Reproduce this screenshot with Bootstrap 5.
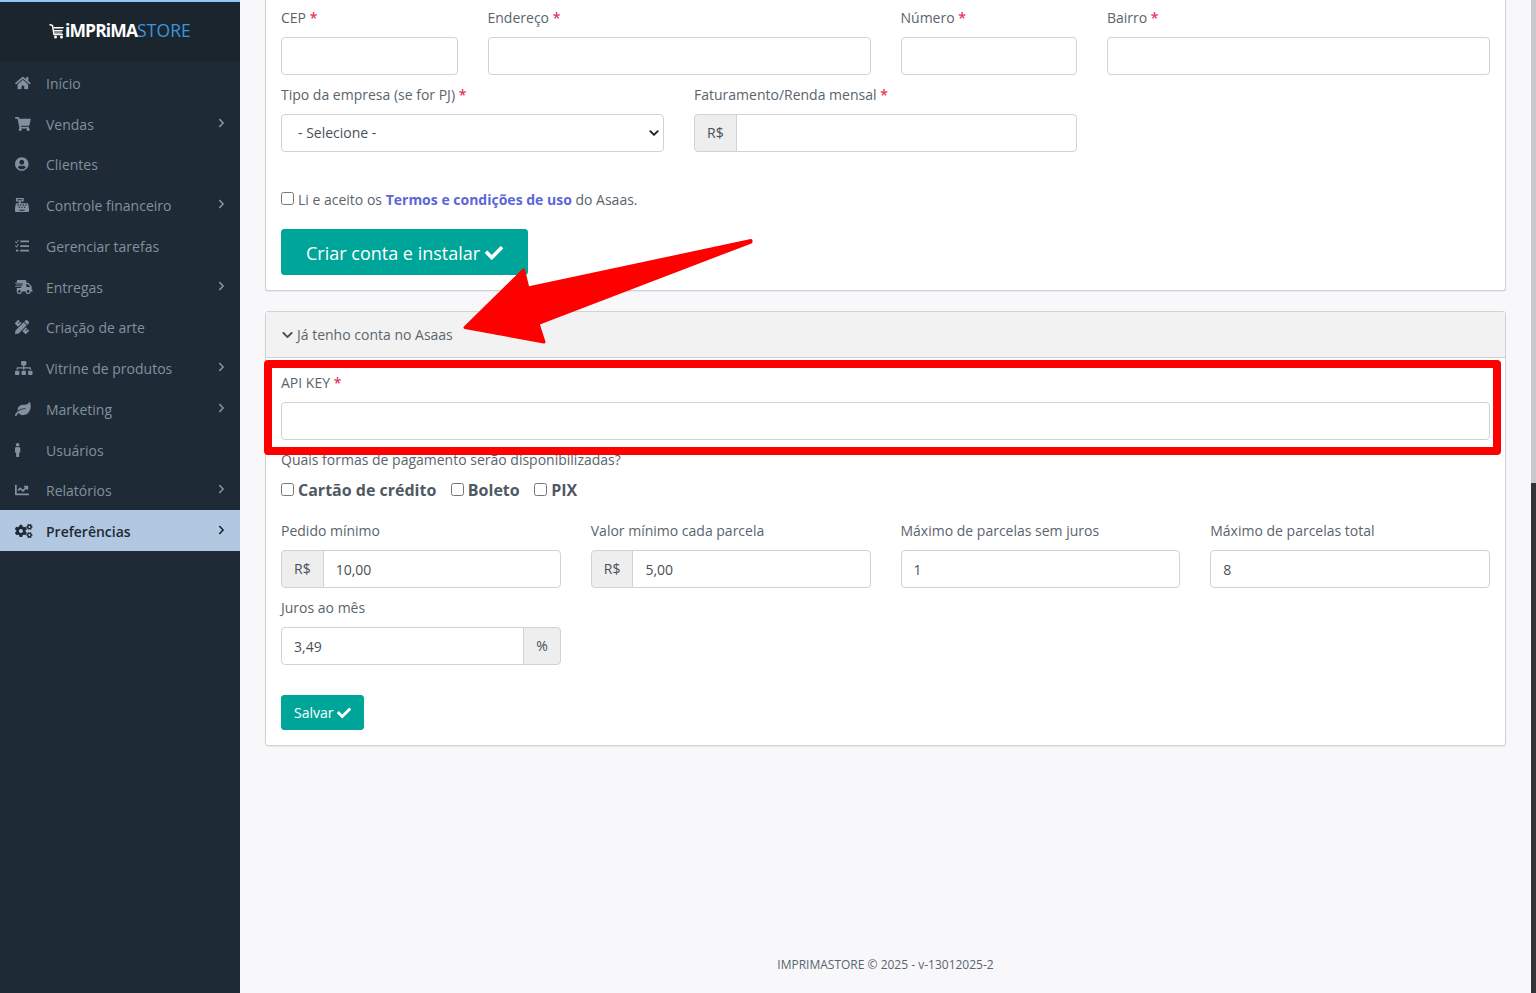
<!DOCTYPE html>
<html lang="pt-BR">
<head>
<meta charset="utf-8">
<title>Imprimastore</title>
<link href="https://cdn.jsdelivr.net/npm/bootstrap@5.3.0/dist/css/bootstrap.min.css" rel="stylesheet">
<style>
html,body{height:100%;}
body{font-family:"Open Sans","Liberation Sans",sans-serif;font-size:14px;color:#495057;background:#f8f8fb;overflow:hidden;}
.side{width:240px;flex:none;background:#1e2a35;border-top:2px solid #8cc8ff;height:100vh;}
.logo-zone{height:60px;padding-bottom:3px;background:#1a252e;color:#fff;font-weight:700;font-size:17.5px;letter-spacing:-.9px;white-space:nowrap;}
.logo-zone svg{width:16px;height:16px;}
.logo-store{color:#3a96de;font-weight:400;letter-spacing:.1px;}
.side-item{height:40.75px;padding:3px 15px 0;color:#82919f;line-height:1;}
.side-item .ico{width:18px;height:14px;fill:currentColor;flex:none;margin-right:13px;margin-top:-2px;}
.side-item .arr{width:7px;height:10px;fill:currentColor;margin-left:auto;margin-right:0;margin-top:-4px;}
.side-on{background:#b1c8e0;color:#1e2a35;font-weight:600;}
.main-pane{min-width:0;padding:0 25px;position:relative;}
.scroll-rail{width:5px;flex:none;background:#c9c9c9;}
.scroll-rail i{display:block;height:483px;}
.scroll-knob{background:#333;height:510px!important;}
.box{border:1px solid #d2d2d2;border-radius:3px;background:#fff;box-shadow:0 1px 1px rgba(0,0,0,.06);}
.box-first{border-top:0;border-radius:0 0 3px 3px;padding:8px 15px 15px;margin-bottom:20px;height:291px;}
.box-second{position:relative;}
.box-head{background:#f2f2f2;border-bottom:1px solid #d2d2d2;height:46px;padding:12px 15px 0;color:#5c666f;line-height:21px;}
.box-head svg{width:13px;height:12px;fill:#495057;margin-right:3px;vertical-align:-1px;}
.box-body{padding:15px 15px 15px;}
.row-30{--bs-gutter-x:30px;}
.fld{margin-bottom:10px;}
.lbl{display:block;line-height:21px;margin-top:-1px;margin-bottom:9px;color:#5a646d;}
.lbl b{color:#e8335a;font-weight:600;}
.form-control,.form-select,.input-group-text{font-size:14px;height:38px;border-color:#cfd2d6;border-radius:4px;color:#495057;}
.form-select{padding:5px 16px 7px;background-image:url("data:image/svg+xml,%3csvg xmlns='http://www.w3.org/2000/svg' viewBox='0 0 16 16'%3e%3cpath fill='none' stroke='%23222' stroke-linecap='round' stroke-linejoin='round' stroke-width='3' d='m2 5 6 6 6-6'/%3e%3c/svg%3e");background-position:right 3px center;background-size:12px 10px;}
.input-group-text{background:#eee;padding:5px 12px 7px;}
.terms{margin:27px 0 19px;line-height:21px;color:#5a646d;}
.terms a{color:#5a67d8;font-weight:700;text-decoration:none;}
.nat{margin:0 4px 0 0;width:13px;height:13px;vertical-align:0;}
.teal{background:#00a59a;border-color:#00a59a;color:#fff;}
.teal svg{fill:#fff;}
.teal:hover{background:#00a59a;color:#fff;}
.btn-big{font-size:18px;height:46px;padding:1px 24px 0;border-radius:3px;line-height:44px;}
.btn-big svg{width:18px;height:18px;vertical-align:-2px;}
.btn-sm2{font-size:14px;height:35px;padding:0 12px;border-radius:3px;line-height:33px;margin-top:20px;}
.btn-sm2 svg{width:14px;height:14px;vertical-align:-2px;}
.ques{line-height:21px;margin-top:-1px;color:#5a646d;}
.pay{margin:10px 0 20px;line-height:21px;font-size:16px;font-weight:700;color:#4f5963;gap:14.5px;}
.foot{font-size:12px;color:#5a646d;line-height:18px;padding-bottom:19px;}
.mark-frame{position:absolute;left:-2px;top:48px;width:1237px;height:95px;border:8px solid #f00;border-radius:4px;pointer-events:none;}
.mark-arrow{position:absolute;left:0;top:0;width:600px;height:400px;pointer-events:none;}
</style>
</head>
<body class="d-flex">
<aside class="side d-flex flex-column">
  <div class="logo-zone d-flex align-items-center justify-content-center">
    <svg viewBox="0 0 16 16"><path d="M.5 1.500l3 1 1.500 9h9" fill="none" stroke="#fff" stroke-width="1.500"/><path d="M4.500 4h10.500l-1 1.500H4.800zM5 7h9l-.6 1.500H5.300zM5.400 9.500h7.600v1H5.600z" fill="#fff"/><circle cx="6.500" cy="14" r="1.500" fill="#fff"/><circle cx="12.500" cy="14" r="1.500" fill="#fff"/></svg><span>iMPRiMA</span><span class="logo-store">STORE</span>
  </div>
  <div class="side-item d-flex align-items-center"><svg class="ico" preserveAspectRatio="xMinYMid" viewBox="0 0 576 512"><path d="M280.37 148.26L96 300.11V464a16 16 0 0 0 16 16l112.06-.29a16 16 0 0 0 15.92-16V368a16 16 0 0 1 16-16h64a16 16 0 0 1 16 16v95.64a16 16 0 0 0 16 16.05L464 480a16 16 0 0 0 16-16V300L295.67 148.26a12.19 12.19 0 0 0-15.3 0zM571.6 251.47L488 182.56V44.05a12 12 0 0 0-12-12h-56a12 12 0 0 0-12 12v72.61L318.47 43a48 48 0 0 0-61 0L4.34 251.47a12 12 0 0 0-1.6 16.9l25.5 31A12 12 0 0 0 45.15 301l235.22-193.74a12.19 12.19 0 0 1 15.3 0L530.9 301a12 12 0 0 0 16.9-1.6l25.5-31a12 12 0 0 0-1.7-16.93z"/></svg>Início</div>
  <div class="side-item d-flex align-items-center"><svg class="ico" preserveAspectRatio="xMinYMid" viewBox="0 0 576 512"><path d="M528.12 301.319l47.273-208C578.806 78.301 567.391 64 551.99 64H159.208l-9.166-44.81C147.758 8.021 137.93 0 126.529 0H24C10.745 0 0 10.745 0 24v16c0 13.255 10.745 24 24 24h69.883l70.248 343.435C147.325 417.1 136 435.222 136 456c0 30.928 25.072 56 56 56s56-25.072 56-56c0-15.674-6.447-29.835-16.824-40h209.647C430.447 426.165 424 440.326 424 456c0 30.928 25.072 56 56 56s56-25.072 56-56c0-22.172-12.888-41.332-31.579-50.405l5.517-24.276c3.413-15.018-8.002-29.319-23.403-29.319H218.117l-6.545-32h293.145c11.206 0 20.92-7.754 23.403-18.681z"/></svg>Vendas<svg class="arr" viewBox="0 0 320 512"><use href="#chev"/></svg></div>
  <div class="side-item d-flex align-items-center"><svg class="ico" preserveAspectRatio="xMinYMid" viewBox="0 0 496 512"><path d="M248 8C111 8 0 119 0 256s111 248 248 248 248-111 248-248S385 8 248 8zm0 96c48.6 0 88 39.4 88 88s-39.4 88-88 88-88-39.4-88-88 39.4-88 88-88zm0 344c-58.7 0-111.3-26.6-146.5-68.2 18.8-35.4 55.6-59.8 98.5-59.8 2.4 0 4.8.4 7.1 1.1 13 4.2 26.6 6.9 40.9 6.9 14.3 0 28-2.7 40.9-6.9 2.3-.7 4.7-1.1 7.1-1.1 42.9 0 79.7 24.4 98.5 59.8C359.3 421.4 306.7 448 248 448z"/></svg>Clientes</div>
  <div class="side-item d-flex align-items-center"><svg class="ico" preserveAspectRatio="xMinYMid" viewBox="0 0 512 512"><path d="M511.1 378.8l-26.700-160c-2.600-15.400-15.900-26.700-31.600-26.700H208v-64h96c8.800 0 16-7.200 16-16V16c0-8.800-7.200-16-16-16H48c-8.800 0-16 7.200-16 16v96c0 8.800 7.200 16 16 16h96v64H59.100c-15.600 0-29 11.300-31.600 26.700L.8 378.700c-.6 3.500-.9 7-.9 10.500V480c0 17.700 14.300 32 32 32h448c17.700 0 32-14.300 32-32v-90.700c.1-3.500-.2-7-.8-10.500zM280 248c0-8.800 7.200-16 16-16h16c8.800 0 16 7.200 16 16v16c0 8.800-7.200 16-16 16h-16c-8.800 0-16-7.200-16-16v-16zm-32 64h16c8.800 0 16 7.200 16 16v16c0 8.800-7.200 16-16 16h-16c-8.800 0-16-7.200-16-16v-16c0-8.800 7.200-16 16-16zm-32-80c8.800 0 16 7.200 16 16v16c0 8.800-7.200 16-16 16h-16c-8.800 0-16-7.200-16-16v-16c0-8.800 7.200-16 16-16h16zM80 80V48h192v32H80zm40 200h-16c-8.800 0-16-7.200-16-16v-16c0-8.800 7.200-16 16-16h16c8.800 0 16 7.200 16 16v16c0 8.800-7.200 16-16 16zm16 64v-16c0-8.800 7.200-16 16-16h16c8.800 0 16 7.200 16 16v16c0 8.800-7.200 16-16 16h-16c-8.800 0-16-7.200-16-16zm216 112c0 4.400-3.600 8-8 8H168c-4.400 0-8-3.600-8-8v-16c0-4.400 3.600-8 8-8h176c4.400 0 8 3.600 8 8v16zm24-112c0 8.800-7.200 16-16 16h-16c-8.800 0-16-7.200-16-16v-16c0-8.800 7.200-16 16-16h16c8.800 0 16 7.200 16 16v16zm48-80c0 8.800-7.200 16-16 16h-16c-8.800 0-16-7.200-16-16v-16c0-8.800 7.200-16 16-16h16c8.800 0 16 7.200 16 16v16z"/></svg>Controle financeiro<svg class="arr" viewBox="0 0 320 512"><use href="#chev"/></svg></div>
  <div class="side-item d-flex align-items-center"><svg class="ico" preserveAspectRatio="xMinYMid" viewBox="0 0 16 16"><path d="M6 1.800h10v2H6zM6 7h10v2H6zM6 12.200h10v2H6zM1 12.200h3v2H1zM.6 2.600l1 1L3.600.8l.8.7-2.700 3.700L0 3.400zM.6 7.200l1 1 2-2.600.8.7-2.700 3.600L0 8z"/></svg>Gerenciar tarefas</div>
  <div class="side-item d-flex align-items-center"><svg class="ico" preserveAspectRatio="xMinYMid" viewBox="0 0 640 512"><path d="M624 352h-16V243.900c0-12.700-5.100-24.900-14.100-33.900L494 110.100c-9-9-21.200-14.100-33.900-14.100H416V48c0-26.500-21.500-48-48-48H112C85.500 0 64 21.500 64 48v48H8c-4.400 0-8 3.600-8 8v16c0 4.400 3.600 8 8 8h272c4.400 0 8 3.600 8 8v16c0 4.400-3.600 8-8 8H40c-4.400 0-8 3.600-8 8v16c0 4.400 3.600 8 8 8h208c4.400 0 8 3.600 8 8v16c0 4.400-3.600 8-8 8H8c-4.400 0-8 3.600-8 8v16c0 4.400 3.600 8 8 8h208c4.400 0 8 3.600 8 8v16c0 4.400-3.600 8-8 8H64v128c0 53 43 96 96 96s96-43 96-96h128c0 53 43 96 96 96s96-43 96-96h48c8.800 0 16-7.200 16-16v-32c0-8.800-7.200-16-16-16zM160 464c-26.500 0-48-21.500-48-48s21.500-48 48-48 48 21.500 48 48-21.500 48-48 48zm320 0c-26.500 0-48-21.500-48-48s21.500-48 48-48 48 21.500 48 48-21.500 48-48 48zm80-208H416V144h44.100l99.900 99.900V256z"/></svg>Entregas<svg class="arr" viewBox="0 0 320 512"><use href="#chev"/></svg></div>
  <div class="side-item d-flex align-items-center"><svg class="ico" preserveAspectRatio="xMinYMid" viewBox="0 0 512 512"><path d="M109.46 244.04l134.58-134.56-44.12-44.12-61.68 61.68a7.919 7.919 0 0 1-11.21 0l-11.21-11.21c-3.1-3.1-3.1-8.12 0-11.21l61.68-61.68-33.64-33.65C131.47-3.1 111.39-3.1 99 9.29L9.29 99c-12.38 12.39-12.39 32.47 0 44.86l100.17 100.18zm388.47-116.8c18.76-18.76 18.75-49.17 0-67.93l-45.25-45.25c-18.76-18.76-49.18-18.76-67.95 0l-46.02 46.01 113.2 113.2 46.02-46.03zM316.08 82.71l-297 296.96L.32 487.11c-2.53 14.49 10.09 27.11 24.59 24.56l107.45-18.84L429.28 195.9 316.08 82.71zm186.63 285.43l-33.64-33.64-61.68 61.68c-3.1 3.1-8.12 3.1-11.21 0l-11.21-11.21c-3.09-3.1-3.09-8.12 0-11.21l61.68-61.68-44.14-44.14L267.93 402.5l100.21 100.2c12.39 12.39 32.47 12.39 44.86 0l89.71-89.7c12.39-12.39 12.39-32.47 0-44.86z"/></svg>Criação de arte</div>
  <div class="side-item d-flex align-items-center"><svg class="ico" preserveAspectRatio="xMinYMid" viewBox="0 0 640 512"><path d="M128 352H32c-17.67 0-32 14.33-32 32v96c0 17.67 14.33 32 32 32h96c17.67 0 32-14.33 32-32v-96c0-17.67-14.33-32-32-32zm-24-80h192v48h48v-48h192v48h48v-57.59c0-21.17-17.23-38.41-38.41-38.41H344v-64h40c17.67 0 32-14.33 32-32V32c0-17.67-14.33-32-32-32H256c-17.67 0-32 14.33-32 32v96c0 17.67 14.33 32 32 32h40v64H94.41C73.23 224 56 241.23 56 262.41V320h48v-48zm264 80h-96c-17.67 0-32 14.33-32 32v96c0 17.67 14.33 32 32 32h96c17.67 0 32-14.33 32-32v-96c0-17.67-14.33-32-32-32zm240 0h-96c-17.67 0-32 14.33-32 32v96c0 17.67 14.33 32 32 32h96c17.67 0 32-14.33 32-32v-96c0-17.67-14.33-32-32-32z"/></svg>Vitrine de produtos<svg class="arr" viewBox="0 0 320 512"><use href="#chev"/></svg></div>
  <div class="side-item d-flex align-items-center"><svg class="ico" preserveAspectRatio="xMinYMid" viewBox="0 0 576 512"><path d="M546.200 9.700c-5.600-12.500-21.600-13-28.300-1.200C486.900 62.400 431.400 96 368 96h-80C182 96 96 182 96 288c0 7 .8 13.700 1.500 20.500C161.300 262.800 253.400 224 384 224c8.800 0 16 7.200 16 16s-7.200 16-16 16C132.600 256 26 410.100 2.400 468c-6.600 16.300 1.200 34.900 17.500 41.600 16.400 6.800 35-1.100 41.800-17.300 1.500-3.600 20.900-47.900 71.900-90.600 32.400 43.900 94 85.800 174.900 77.200C465.500 467.500 576 326.700 576 154.300c0-50.200-10.800-102.200-29.800-144.600z"/></svg>Marketing<svg class="arr" viewBox="0 0 320 512"><use href="#chev"/></svg></div>
  <div class="side-item d-flex align-items-center"><svg class="ico" preserveAspectRatio="xMinYMid" viewBox="0 0 192 512"><path d="M96 0c35.346 0 64 28.654 64 64s-28.654 64-64 64-64-28.654-64-64S60.654 0 96 0m48 144h-11.360c-22.711 10.443-49.590 10.894-73.280 0H48c-26.510 0-48 21.490-48 48v136c0 13.255 10.745 24 24 24h16v136c0 13.255 10.745 24 24 24h64c13.255 0 24-10.745 24-24V352h16c13.255 0 24-10.745 24-24V192c0-26.510-21.490-48-48-48z"/></svg>Usuários</div>
  <div class="side-item d-flex align-items-center"><svg class="ico" preserveAspectRatio="xMinYMid" viewBox="0 0 512 512"><path d="M496 384H64V80c0-8.840-7.160-16-16-16H16C7.160 64 0 71.160 0 80v336c0 17.670 14.330 32 32 32h464c8.840 0 16-7.160 16-16v-32c0-8.840-7.160-16-16-16zM464 96H345.940c-21.380 0-32.090 25.850-16.970 40.970l32.400 32.400L288 242.750l-73.370-73.370c-12.500-12.500-32.760-12.500-45.250 0l-68.690 68.690c-6.250 6.250-6.250 16.380 0 22.630l22.620 22.620c6.250 6.250 16.380 6.250 22.630 0L192 237.250l73.370 73.370c12.500 12.500 32.760 12.500 45.250 0l96-96 32.400 32.400c15.120 15.120 40.970 4.410 40.970-16.970V112c0-8.840-7.160-16-16-16z"/></svg>Relatórios<svg class="arr" viewBox="0 0 320 512"><use href="#chev"/></svg></div>
  <div class="side-item side-on d-flex align-items-center"><svg class="ico" preserveAspectRatio="xMinYMid" viewBox="0 0 640 512"><path d="M512.100 191l-8.200 14.300c-3 5.300-9.400 7.500-15.100 5.400-11.800-4.400-22.600-10.700-32.100-18.600-4.600-3.800-5.800-10.500-2.800-15.700l8.200-14.300c-6.900-8-12.300-17.300-15.900-27.400h-16.500c-6 0-11.200-4.300-12.200-10.300-2-12-2.100-24.600 0-37.100 1-6 6.200-10.400 12.200-10.400h16.500c3.600-10.100 9-19.400 15.900-27.400l-8.200-14.300c-3-5.200-1.900-11.900 2.800-15.700 9.500-7.900 20.400-14.200 32.100-18.600 5.700-2.100 12.100.1 15.100 5.400l8.200 14.300c10.500-1.900 21.200-1.900 31.700 0L552.600 4.400c3-5.300 9.400-7.500 15.100-5.400 11.800 4.400 22.600 10.700 32.100 18.600 4.600 3.800 5.800 10.500 2.800 15.700l-8.200 14.300c6.900 8 12.300 17.300 15.900 27.400h16.500c6 0 11.200 4.300 12.200 10.300 2 12 2.100 24.600 0 37.100-1 6-6.200 10.400-12.200 10.400h-16.500c-3.600 10.100-9 19.400-15.900 27.400l8.200 14.300c3 5.200 1.900 11.900-2.800 15.700-9.500 7.900-20.400 14.200-32.100 18.600-5.700 2.100-12.100-.1-15.100-5.400l-8.200-14.300c-10.400 1.900-21.200 1.900-31.700 0zm-10.500-58.800c38.500 29.600 82.400-14.300 52.800-52.800-38.500-29.700-82.400 14.300-52.800 52.800zM386.300 286.100l33.700 16.800c10.100 5.800 14.500 18.100 10.500 29.100-8.900 24.200-26.400 46.400-42.600 65.800-7.400 8.900-20.200 11.100-30.300 5.300l-29.100-16.800c-16 13.700-34.600 24.600-54.900 31.700v33.600c0 11.600-8.300 21.600-19.700 23.600-24.600 4.200-50.400 4.400-75.900 0-11.500-2-20-11.900-20-23.600V418c-20.300-7.200-38.900-18-54.900-31.700L74 403c-10 5.800-22.900 3.600-30.300-5.300-16.200-19.400-33.300-41.600-42.200-65.700-4-10.900.4-23.200 10.500-29.100l33.300-16.800c-3.900-20.900-3.900-42.400 0-63.400L12 205.800c-10.100-5.800-14.600-18.100-10.500-29 8.900-24.200 26-46.400 42.200-65.800 7.400-8.900 20.200-11.100 30.300-5.300l29.100 16.800c16-13.700 34.600-24.600 54.900-31.700V57.100c0-11.500 8.200-21.500 19.600-23.500 24.600-4.200 50.500-4.400 76-.1 11.500 2 20 11.900 20 23.600v33.600c20.300 7.200 38.900 18 54.900 31.700l29.100-16.800c10-5.800 22.900-3.600 30.300 5.300 16.200 19.400 33.200 41.600 42.100 65.800 4 10.900.1 23.200-10 29.100l-33.700 16.800c3.900 21 3.900 42.500 0 63.500zm-117.600 21.100c59.200-77-28.700-164.900-105.700-105.700-59.200 77 28.700 164.900 105.700 105.700zm243.400 182.700l-8.200 14.300c-3 5.300-9.400 7.500-15.100 5.400-11.800-4.400-22.600-10.700-32.100-18.600-4.600-3.800-5.800-10.500-2.800-15.700l8.200-14.300c-6.900-8-12.300-17.300-15.900-27.400h-16.500c-6 0-11.200-4.300-12.200-10.300-2-12-2.100-24.600 0-37.100 1-6 6.200-10.400 12.200-10.400h16.500c3.600-10.100 9-19.400 15.900-27.400l-8.200-14.300c-3-5.200-1.900-11.900 2.800-15.700 9.500-7.900 20.400-14.200 32.100-18.600 5.700-2.100 12.100.1 15.100 5.400l8.200 14.300c10.500-1.900 21.200-1.900 31.700 0l8.200-14.300c3-5.300 9.400-7.500 15.100-5.400 11.800 4.400 22.600 10.700 32.100 18.600 4.600 3.800 5.800 10.500 2.800 15.700l-8.200 14.300c6.900 8 12.300 17.300 15.900 27.400h16.500c6 0 11.200 4.300 12.200 10.300 2 12 2.100 24.600 0 37.100-1 6-6.200 10.400-12.200 10.400h-16.500c-3.600 10.100-9 19.400-15.900 27.400l8.200 14.300c3 5.200 1.900 11.900-2.800 15.700-9.500 7.900-20.400 14.200-32.100 18.600-5.700 2.100-12.100-.1-15.100-5.400l-8.200-14.300c-10.400 1.900-21.200 1.900-31.700 0zM501.600 431c38.500 29.600 82.400-14.300 52.800-52.800-38.500-29.600-82.400 14.300-52.800 52.800z"/></svg>Preferências<svg class="arr" viewBox="0 0 320 512"><use href="#chev"/></svg></div>
</aside>
<svg width="0" height="0" class="position-absolute"><defs><path id="chev" d="M285.476 272.971L91.132 467.314c-9.373 9.373-24.569 9.373-33.941 0l-22.667-22.667c-9.357-9.357-9.375-24.522-.04-33.901L188.505 256 34.484 101.255c-9.335-9.379-9.317-24.544.04-33.901l22.667-22.667c9.373-9.373 24.569-9.373 33.941 0L285.475 239.03c9.373 9.372 9.373 24.568.001 33.941z"/></defs></svg>
<main class="main-pane flex-grow-1 d-flex flex-column">
  <section class="box box-first">
    <div class="row row-30">
      <div class="col-2 fld"><label class="lbl">CEP <b>*</b></label><input class="form-control"></div>
      <div class="col-4 fld"><label class="lbl">Endereço <b>*</b></label><input class="form-control"></div>
      <div class="col-2 fld"><label class="lbl">Número <b>*</b></label><input class="form-control"></div>
      <div class="col-4 fld"><label class="lbl">Bairro <b>*</b></label><input class="form-control"></div>
    </div>
    <div class="row row-30">
      <div class="col-4 fld"><label class="lbl">Tipo da empresa (se for PJ) <b>*</b></label><select class="form-select"><option>- Selecione -</option></select></div>
      <div class="col-4 fld"><label class="lbl">Faturamento/Renda mensal <b>*</b></label><div class="input-group"><span class="input-group-text">R$</span><input class="form-control"></div></div>
    </div>
    <div class="terms"><input type="checkbox" class="nat">Li e aceito os <a href="#">Termos e condições de uso</a> do Asaas.</div>
    <button class="btn teal btn-big">Criar conta e instalar <svg viewBox="0 0 512 512"><use href="#tick"/></svg></button>
  </section>
  <section class="box box-second">
    <div class="box-head"><svg viewBox="0 0 448 512"><path d="M207.029 381.476L12.686 187.132c-9.373-9.373-9.373-24.569 0-33.941l22.667-22.667c9.357-9.357 24.522-9.375 33.901-.04L224 284.505l154.745-154.021c9.379-9.335 24.544-9.317 33.901.04l22.667 22.667c9.373 9.373 9.373 24.569 0 33.941L240.971 381.476c-9.373 9.372-24.569 9.372-33.942 0z"/></svg>Já tenho conta no Asaas</div>
    <div class="box-body">
      <div class="fld"><label class="lbl">API KEY <b>*</b></label><input class="form-control"></div>
      <div class="ques">Quais formas de pagamento serão disponibilizadas?</div>
      <div class="pay d-flex">
        <span><input type="checkbox" class="nat">Cartão de crédito</span>
        <span><input type="checkbox" class="nat">Boleto</span>
        <span><input type="checkbox" class="nat">PIX</span>
      </div>
      <div class="row row-30">
        <div class="col-3 fld"><label class="lbl">Pedido mínimo</label><div class="input-group"><span class="input-group-text">R$</span><input class="form-control" value="10,00"></div></div>
        <div class="col-3 fld"><label class="lbl">Valor mínimo cada parcela</label><div class="input-group"><span class="input-group-text">R$</span><input class="form-control" value="5,00"></div></div>
        <div class="col-3 fld"><label class="lbl">Máximo de parcelas sem juros</label><input class="form-control" value="1"></div>
        <div class="col-3 fld"><label class="lbl">Máximo de parcelas total</label><input class="form-control" value="8"></div>
        <div class="col-3 fld"><label class="lbl">Juros ao mês</label><div class="input-group"><input class="form-control" value="3,49"><span class="input-group-text">%</span></div></div>
      </div>
      <button class="btn teal btn-sm2">Salvar <svg viewBox="0 0 512 512"><use href="#tick"/></svg></button>
    </div>
    <div class="mark-frame"></div>
  </section>
  <footer class="foot mt-auto text-center">IMPRIMASTORE © 2025 - v-13012025-2</footer>
  <svg class="mark-arrow" viewBox="240 0 600 400"><defs><path id="tick" d="M173.898 439.404l-166.4-166.4c-9.997-9.997-9.997-26.206 0-36.204l36.203-36.204c9.997-9.998 26.207-9.998 36.204 0L192 312.69 432.095 72.596c9.997-9.997 26.207-9.997 36.204 0l36.203 36.204c9.997 9.997 9.997 26.206 0 36.204l-294.4 294.401c-9.998 9.997-26.207 9.997-36.204-.001z"/></defs><polygon points="751,240.500 528,288 523.500,270 465,327.500 544,342 538,323.500 751,242" fill="#f00" stroke="#f00" stroke-width="3" stroke-linejoin="round"/></svg>
</main>
<div class="scroll-rail"><i></i><i class="scroll-knob"></i></div>
<script src="https://cdn.jsdelivr.net/npm/bootstrap@5.3.0/dist/js/bootstrap.bundle.min.js"></script>
</body>
</html>
